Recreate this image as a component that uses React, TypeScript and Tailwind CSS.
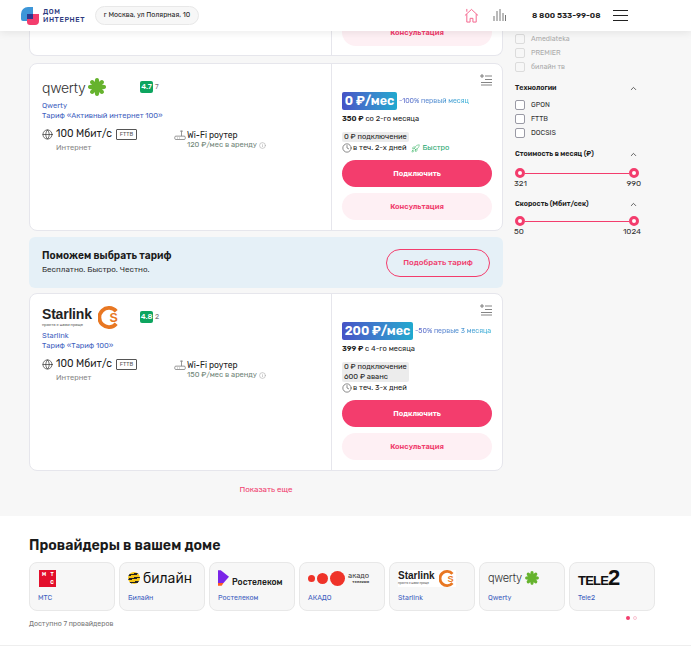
// App.tsx
import { ChevronUp, Globe, Clock, Info, Rocket } from "lucide-react";

const font = "font-['Rubik','Inter','Noto_Sans',sans-serif]";

const QwertyLogo = ({ small = false }: { small?: boolean }) => (
  <div className="flex items-center gap-[3px]">
    <span className={`font-['Inter',sans-serif] font-light tracking-[-0.3px] text-[#333] ${small ? "text-[11px]" : "text-[14px]"}`}>
      qwerty
    </span>
    <svg viewBox="0 0 20 20" className={small ? "h-[14px] w-[14px]" : "h-[18px] w-[18px]"}>
      <g fill="#66b32e">
        <circle cx="10" cy="10" r="6" />
        {[0, 45, 90, 135, 180, 225, 270, 315].map((a) => (
          <ellipse key={a} cx="10" cy="3.4" rx="2.4" ry="3.4" transform={`rotate(${a} 10 10)`} />
        ))}
      </g>
    </svg>
  </div>
);

const StarlinkLogo = ({ small = false }: { small?: boolean }) => (
  <div className={`flex items-center ${small ? "gap-[4px] bg-white" : "gap-[6px]"}`}>
    <div className="flex flex-col">
      <span className={`font-['Liberation_Sans',sans-serif] font-bold leading-none text-[#222] ${small ? "text-[10px]" : "text-[14px] tracking-[-0.2px]"}`}>
        Starlink
      </span>
      <span className={`leading-none text-[#555] ${small ? "mt-[1px] text-[3px]" : "mt-[2px] text-[4px]"}`}>просто с нами проще</span>
    </div>
    <svg viewBox="0 0 24 24" className={small ? "h-[17px] w-[17px]" : "h-[23px] w-[23px]"}>
      <path d="M19 5.500A10 10 0 1 0 19 18.500" fill="none" stroke="#e87722" strokeWidth="4" />
      <text x="12" y="17" fontSize="13" fontWeight="700" fill="#e87722" fontFamily="Liberation Sans">S</text>
    </svg>
  </div>
);

const RouterIcon = () => (
  <svg viewBox="0 0 16 16" className="-mt-[1px] mr-[1px] h-[12px] w-[12px] text-[#777]" fill="none" stroke="currentColor" strokeWidth="1">
    <rect x="1" y="9.500" width="14" height="4.500" rx="1.500" />
    <path d="M10 9.500V2.500M8 3.500a2.500 2.500 0 0 1 4 0M4 12h1M7 12h1" />
  </svg>
);

const CompareIcon = () => (
  <svg viewBox="0 0 12 12" className="h-[12px] w-[12px] text-[#666]" fill="none" stroke="currentColor" strokeWidth="0.8">
    <path d="M0 2h4M2 0v4M5 2h7M5 5.500h7M1 8.500h11M1 11h11" />
  </svg>
);

type CardProps = {
  logo: React.ReactNode;
  rating: string;
  reviews: string;
  name: string;
  tariff: string;
  routerPrice: string;
  price: string;
  pillWidth: string;
  discount: string;
  nextPrice: string;
  nextLabel: string;
  fees: string[];
  time: string;
  fast?: boolean;
};

const TariffCard = (p: CardProps) => (
  <div className="flex rounded-[8px] border border-[#e6e6ec] bg-white">
    <div className="w-[301px] shrink-0 px-[12px] pt-[10px]">
      <div className="flex h-[26px] items-center">
        <div className="w-[98px]">{p.logo}</div>
        <span className="flex h-[12px] w-[13px] items-center justify-center rounded-[2px] bg-[#0da55f] text-[7.5px] font-medium text-white">{p.rating}</span>
        <span className="ml-[2px] text-[7px] text-[#777]">{p.reviews}</span>
      </div>
      <p className="mt-[1px] text-[7.500px] leading-[10px] text-[#3f5fc0]">{p.name}</p>
      <p className="text-[7.500px] leading-[10px] text-[#3f5fc0]">{p.tariff}</p>
      <div className="mt-[6px] flex">
        <div className="w-[132px]">
          <div className="flex items-center">
            <Globe className="h-[11px] w-[11px] text-[#333]" strokeWidth={1.5} />
            <span className="ml-[3px] text-[10.3px] leading-[14px] text-[#222]">100 Мбит/с</span>
            <span className="ml-[4px] rounded-[1px] border border-[#555] px-[3px] text-[5.5px] leading-[9px] text-[#555]">FTTB</span>
          </div>
          <p className="ml-[14px] mt-[1px] text-[7.500px] leading-[11px] text-[#888]">Интернет</p>
        </div>
        <div className="mt-[3px] flex items-start">
          <RouterIcon />
          <div>
            <p className="text-[8.500px] leading-[10px] text-[#222]">Wi-Fi роутер</p>
            <p className="flex items-center gap-[2px] text-[7.500px] leading-[10px] text-[#6f8577]">
              {p.routerPrice}
              <Info className="h-[7px] w-[7px] text-[#aaa]" />
            </p>
          </div>
        </div>
      </div>
    </div>
    <div className="flex-1 border-l border-[#e6e6ec] px-[10px] pb-[10px] pt-[10px]">
      <div className="flex h-[18px] justify-end">
        <CompareIcon />
      </div>
      <div className="flex items-center">
        <span className={`${p.pillWidth} shrink-0 rounded-[2px] bg-gradient-to-r from-[#4652c6] to-[#1ea9cf] text-center text-[12.5px] font-semibold leading-[18px] text-white`}>
          {p.price}
        </span>
        <span className="ml-[2px] whitespace-nowrap bg-gradient-to-r from-[#5a62c8] to-[#2fb0d6] bg-clip-text text-[7px] text-transparent">{p.discount}</span>
      </div>
      <p className="mt-[4px] text-[7.500px] leading-[10px] text-[#222]">
        <b className="font-semibold">{p.nextPrice}</b> {p.nextLabel}
      </p>
      <div className="mt-[8px] w-fit rounded-[2px] bg-[#ececec] px-[2px] text-[7.500px] leading-[10px] text-[#222]">
        {p.fees.map((f) => (
          <p key={f}>{f}</p>
        ))}
      </div>
      <div className="mt-[1px] flex h-[10px] items-center gap-[1px] text-[7.500px] text-[#222]">
        <Clock className="h-[10px] w-[10px]" strokeWidth={1.25} />
        {p.time}
        {p.fast && (
          <>
            <Rocket className="ml-[3px] h-[9px] w-[9px] text-[#3fb56a]" strokeWidth={1.5} />
            <span className="ml-[2px] text-[#1fa870]">Быстро</span>
          </>
        )}
      </div>
      <button className="mt-[7px] h-[27px] w-full rounded-full bg-[#f33d6d] text-[7.500px] font-semibold text-white">Подключить</button>
      <button className="mt-[6px] h-[27px] w-full rounded-full bg-[#fef0f4] text-[7.500px] font-semibold text-[#f0406f]">Консультация</button>
    </div>
  </div>
);

const Check = ({ label, disabled = false }: { label: string; disabled?: boolean }) => (
  <div className="flex h-[14px] items-center gap-[6px]">
    <span className={`h-[10px] w-[10px] rounded-[2px] border ${disabled ? "border-[#dcdcdc]" : "border-[#9a9aa5] bg-white"}`} />
    <span className={`text-[7px] ${disabled ? "text-[#aaa]" : "text-[#333]"}`}>{label}</span>
  </div>
);

const FilterTitle = ({ title }: { title: string }) => (
  <div className="flex h-[12px] w-[123px] items-center justify-between">
    <span className="text-[7px] font-semibold text-[#222]">{title}</span>
    <ChevronUp className="h-[9px] w-[9px] text-[#333]" />
  </div>
);

const Range = ({ min, max }: { min: string; max: string }) => (
  <div className="w-[124px]">
    <div className="flex items-center">
      <span className="h-[10px] w-[10px] shrink-0 rounded-full border-[3px] border-[#f33d6d] bg-white" />
      <span className="h-[1px] flex-1 bg-[#f33d6d]" />
      <span className="h-[10px] w-[10px] shrink-0 rounded-full border-[3px] border-[#f33d6d] bg-white" />
    </div>
    <div className="flex justify-between text-[8px] leading-[11px] text-[#333]">
      <span className="-ml-[1px]">{min}</span>
      <span className="-mr-[2px]">{max}</span>
    </div>
  </div>
);

const ProviderCard = ({ name, children }: { name: string; children: React.ReactNode }) => (
  <div className="flex h-[49px] w-[86px] flex-col rounded-[8px] border border-[#e8e8e8] bg-[#f7f7f7] pl-[8px]">
    <div className="flex h-[30px] items-center">{children}</div>
    <p className="text-[7px] leading-[10px] text-[#3f5fc0]">{name}</p>
  </div>
);

export default function App() {
  return (
    <div className={`${font} flex h-[646px] w-[691px] flex-col overflow-hidden bg-[#f7f7f7]`}>
      <header className="z-10 flex h-[31px] shrink-0 items-center bg-white pl-[21px] pr-[63px] shadow-[0_2px_8px_rgba(0,0,0,0.08)]">
        <svg viewBox="0 0 18 18" className="h-[18px] w-[18px]">
          <path d="M7 0h5v8H6v6H2a2 2 0 0 1-2-2V7a7 7 0 0 1 7-7z" fill="#3d96d8" />
          <path d="M6 7h12v7a4 4 0 0 1-4 4H9a3 3 0 0 1-3-3z" fill="#f33d6d" />
          <rect x="6" y="7" width="6" height="5" fill="#2f3a90" />
        </svg>
        <div className="ml-[4px] w-[43px] text-[7px] font-medium leading-[8px] tracking-[0.6px] text-[#2d3a80]">
          <p>ДОМ</p>
          <p>ИНТЕРНЕТ</p>
        </div>
        <div className="ml-[9px] flex h-[19px] w-[104px] items-center justify-center rounded-full border border-[#e8e8e8] bg-[#f7f7f7] text-[7px] text-[#222]">
          г Москва, ул Полярная, 10
        </div>
        <svg viewBox="0 0 16 16" className="ml-[265px] h-[15px] w-[15px]" fill="none" stroke="#f4608a" strokeWidth="1">
          <path d="M1 8l7-6.500L15 8M3 6.500V15h3.500v-4h3v4H13V6.500M3 1v3" />
        </svg>
        <svg viewBox="0 0 13 13" className="ml-[14px] h-[13px] w-[13px]" fill="none" stroke="#777" strokeWidth="1">
          <path d="M1 12V7M4 12V2M7 12V0M10 12V4M12.500 12V6" />
        </svg>
        <span className="ml-[26px] text-[8px] font-semibold text-[#222]">8 800 533-99-08</span>
        <div className="ml-auto flex w-[15px] flex-col gap-[4px]">
          <span className="h-[1px] bg-[#222]" />
          <span className="h-[1px] bg-[#222]" />
          <span className="h-[1px] bg-[#222]" />
        </div>
      </header>

      <main className="flex flex-1 items-start pl-[29px]">
        <div className="w-[474px] shrink-0">
          <div className="flex h-[25px] rounded-b-[8px] border border-t-0 border-[#e6e6ec] bg-white">
            <div className="w-[301px] shrink-0" />
            <div className="flex-1 border-l border-[#e6e6ec] px-[10px]">
              <div className="flex h-[15px] items-start justify-center rounded-b-[14px] bg-[#fef0f4] text-[7.500px] font-semibold leading-[3px] text-[#f0406f]">Консультация</div>
            </div>
          </div>
          <div className="mt-[7px]">
            <TariffCard
              logo={<QwertyLogo />}
              rating="4.7"
              reviews="7"
              name="Qwerty"
              tariff="Тариф «Активный интернет 100»"
              routerPrice="120 ₽/мес в аренду"
              price="0 ₽/мес"
              pillWidth="w-[55px]"
              discount="-100% первый месяц"
              nextPrice="350 ₽"
              nextLabel="со 2-го месяца"
              fees={["0 ₽ подключение"]}
              time="в теч. 2-х дней"
              fast
            />
          </div>
          <div className="mt-[6px] flex h-[51px] items-center justify-between rounded-[6px] bg-[#e5f0f7] pl-[13px] pr-[13px]">
            <div>
              <p className="text-[10.2px] font-semibold leading-[14px] text-[#1a1a1a]">Поможем выбрать тариф</p>
              <p className="text-[8px] leading-[13px] text-[#333]">Бесплатно. Быстро. Честно.</p>
            </div>
            <button className="h-[28px] w-[104px] rounded-full border border-[#f33d6d] text-[8px] font-medium text-[#f0406f]">Подобрать тариф</button>
          </div>
          <div className="mt-[5px]">
            <TariffCard
              logo={<StarlinkLogo />}
              rating="4.8"
              reviews="2"
              name="Starlink"
              tariff="Тариф «Тариф 100»"
              routerPrice="150 ₽/мес в аренду"
              price="200 ₽/мес"
              pillWidth="w-[71px]"
              discount="-50% первые 3 месяца"
              nextPrice="399 ₽"
              nextLabel="с 4-го месяца"
              fees={["0 ₽ подключение", "600 ₽ аванс"]}
              time="в теч. 3-х дней"
            />
          </div>
          <p className="mt-[14px] text-center text-[8px] leading-[10px] text-[#f0406f]">Показать еще</p>
        </div>

        <aside className="ml-[12px] pt-[1px]">
          <Check label="Amediateka" disabled />
          <Check label="PREMIER" disabled />
          <Check label="билайн тв" disabled />
          <div className="mt-[8px]">
            <FilterTitle title="Технологии" />
          </div>
          <div className="mt-[4px]">
            <Check label="GPON" />
            <Check label="FTTB" />
            <Check label="DOCSIS" />
          </div>
          <div className="mt-[8px]">
            <FilterTitle title="Стоимость в месяц (₽)" />
          </div>
          <div className="mt-[8px]">
            <Range min="321" max="990" />
          </div>
          <div className="mt-[9px]">
            <FilterTitle title="Скорость (Мбит/сек)" />
          </div>
          <div className="mt-[6px]">
            <Range min="50" max="1024" />
          </div>
        </aside>
      </main>

      <section className="h-[130px] shrink-0 border-b border-[#eee] bg-white pl-[29px] pt-[21px]">
        <h2 className="text-[14.2px] font-semibold leading-[18px] text-[#1a1a1a]">Провайдеры в вашем доме</h2>
        <div className="mt-[7px] flex gap-[4px]">
          <ProviderCard name="МТС">
            <div className="ml-[1px] grid h-[17px] w-[17px] grid-cols-2 bg-[#e30f2c] pl-[1px] text-center text-[5px] font-bold leading-[8px] text-white">
              <span>М</span>
              <span>Т</span>
              <span />
              <span>С</span>
            </div>
          </ProviderCard>
          <ProviderCard name="Билайн">
            <span className="h-[12px] w-[12px] rounded-full bg-[repeating-linear-gradient(170deg,#f5c518_0,#f5c518_2.5px,#222_2.5px,#222_4px)]" />
            <span className="ml-[3px] font-['Inter',sans-serif] text-[14px] leading-[16px] text-[#111]">билайн</span>
          </ProviderCard>
          <ProviderCard name="Ростелеком">
            <svg viewBox="0 0 12 18" className="h-[17px] w-[11px]">
              <path d="M0 0h3l9 7-6 7H0z" fill="#7b24e8" />
              <path d="M0 14h6l-2 3H0z" fill="#ff5a1f" />
            </svg>
            <span className="ml-[3px] mt-[7px] text-[8.500px] font-medium leading-[10px] text-[#222]">Ростелеком</span>
          </ProviderCard>
          <ProviderCard name="АКАДО">
            <span className="h-[7px] w-[7px] shrink-0 rounded-full bg-[#ef3329]" />
            <span className="ml-[2px] h-[11px] w-[11px] shrink-0 rounded-full bg-[#ef3329]" />
            <span className="ml-[2px] h-[15px] w-[15px] shrink-0 rounded-full bg-[#ef3329]" />
            <div className="ml-[3px] text-right text-[#444]">
              <p className="text-[7.500px] leading-[7px]">акадо</p>
              <p className="text-[4px] font-semibold leading-[5px]">телеком</p>
            </div>
          </ProviderCard>
          <ProviderCard name="Starlink">
            <StarlinkLogo small />
          </ProviderCard>
          <ProviderCard name="Qwerty">
            <QwertyLogo small />
          </ProviderCard>
          <ProviderCard name="Tele2">
            <div className="flex items-end font-['Liberation_Sans',sans-serif] font-bold leading-none text-[#111]">
              <span className="text-[13px] tracking-[-0.8px]">TELE</span>
              <span className="text-[22px] leading-[18px]">2</span>
            </div>
          </ProviderCard>
        </div>
        <div className="flex h-[9px] w-[626px] items-start justify-between pt-[5px]">
          <p className="mt-[3px] whitespace-nowrap text-[7px] leading-[9px] text-[#777]">Доступно 7 провайдеров</p>
          <div className="ml-auto mr-[18px] flex gap-[3px]">
            <span className="h-[4px] w-[4px] rounded-full bg-[#f33d6d]" />
            <span className="h-[4px] w-[4px] rounded-full border border-[#f9c3d2]" />
          </div>
        </div>
      </section>
    </div>
  );
}
